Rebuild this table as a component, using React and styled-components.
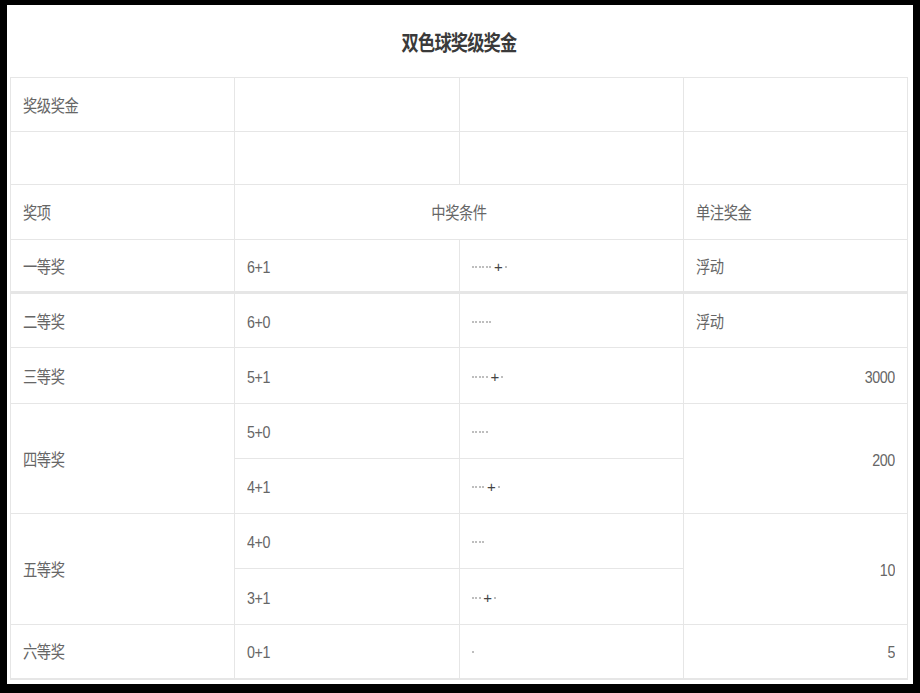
import React from "react";
import styled, { createGlobalStyle } from "styled-components";

const GlobalStyle = createGlobalStyle`
  html, body {
    margin: 0;
    padding: 0;
    background: #000;
  }
  body {
    font-family: "Liberation Sans", "Noto Sans CJK SC", sans-serif;
  }
`;

const Frame = styled.div`
  width: 920px;
  height: 693px;
  box-sizing: border-box;
  padding: 5px 7px 9px 7px;
`;

const Panel = styled.div`
  background: #fff;
  height: 100%;
  box-sizing: border-box;
  padding: 0 5px 5px 3px;
`;

const Title = styled.h2`
  margin: 0;
  height: 72px;
  line-height: 72px;
  text-align: center;
  font-family: "Noto Sans CJK SC", sans-serif;
  font-size: 21px;
  font-weight: 700;
  color: #3a3a3a;
  letter-spacing: -1px;

  span {
    display: inline-block;
    transform: scaleX(0.82);
  }
`;

const Table = styled.table`
  width: 898px;
  border-collapse: collapse;
  table-layout: fixed;
  border: 1px solid #e6e6e6;
  border-bottom-width: 2px;
  color: #666;
  font-size: 17px;
`;

const Row = styled.tr`
  height: ${(p) => p.$h || 55}px;
  border-bottom: ${(p) => (p.$thick ? "3px solid #e6e6e6" : "1px solid #e6e6e6")};
`;

const Cell = styled.td`
  border: 1px solid #e6e6e6;
  padding: 4px 12px 0;
  vertical-align: middle;
  text-align: ${(p) => p.$align || "left"};
  white-space: nowrap;
`;

const Text = styled.span`
  display: inline-block;
  line-height: 20px;
  transform: scaleX(0.84);
  transform-origin: ${(p) => p.$origin || "left"} center;
  letter-spacing: -0.5px;
`;

const Balls = styled.span`
  display: inline-flex;
  align-items: center;
  height: 20px;
  vertical-align: top;
  margin-top: -1px;
`;

const Dot = styled.span`
  width: 2px;
  height: 2px;
  border-radius: 50%;
  background: #a8a8a8;
  margin-right: 1.6px;
`;

const Plus = styled.span`
  font-size: 15px;
  line-height: 14px;
  color: #444;
  margin: 0 2px 0 1px;
`;

const Pick = ({ red, blue }) => (
  <Balls>
    {Array.from({ length: red }).map((_, i) => (
      <Dot key={i} />
    ))}
    {blue && (
      <>
        <Plus>+</Plus>
        <Dot />
      </>
    )}
  </Balls>
);

const T = ({ children, align }) => (
  <Cell $align={align}>
    <Text $origin={align === "right" ? "right" : align === "center" ? "center" : "left"}>
      {children}
    </Text>
  </Cell>
);

const App = () => (
  <Frame>
    <GlobalStyle />
    <Panel>
      <Title>
        <span>双色球奖级奖金</span>
      </Title>
      <Table>
        <tbody>
          <Row $h={54}>
            <T>奖级奖金</T>
            <Cell />
            <Cell />
            <Cell />
          </Row>
          <Row $h={53}>
            <Cell />
            <Cell />
            <Cell />
            <Cell />
          </Row>
          <Row $h={55}>
            <T>奖项</T>
            <Cell colSpan={2} $align="center">
              <Text $origin="center">中奖条件</Text>
            </Cell>
            <T>单注奖金</T>
          </Row>
          <Row $h={53} $thick>
            <T>一等奖</T>
            <T>6+1</T>
            <Cell><Pick red={6} blue /></Cell>
            <T>浮动</T>
          </Row>
          <Row $h={55}>
            <T>二等奖</T>
            <T>6+0</T>
            <Cell><Pick red={6} /></Cell>
            <T>浮动</T>
          </Row>
          <Row $h={56}>
            <T>三等奖</T>
            <T>5+1</T>
            <Cell><Pick red={5} blue /></Cell>
            <T align="right">3000</T>
          </Row>
          <Row $h={55}>
            <Cell rowSpan={2}><Text>四等奖</Text></Cell>
            <T>5+0</T>
            <Cell><Pick red={5} /></Cell>
            <Cell rowSpan={2} $align="right"><Text $origin="right">200</Text></Cell>
          </Row>
          <Row $h={55}>
            <T>4+1</T>
            <Cell><Pick red={4} blue /></Cell>
          </Row>
          <Row $h={55}>
            <Cell rowSpan={2}><Text>五等奖</Text></Cell>
            <T>4+0</T>
            <Cell><Pick red={4} /></Cell>
            <Cell rowSpan={2} $align="right"><Text $origin="right">10</Text></Cell>
          </Row>
          <Row $h={56}>
            <T>3+1</T>
            <Cell><Pick red={3} blue /></Cell>
          </Row>
          <Row $h={54}>
            <T>六等奖</T>
            <T>0+1</T>
            <Cell><Pick red={1} /></Cell>
            <T align="right">5</T>
          </Row>
        </tbody>
      </Table>
    </Panel>
  </Frame>
);

export default App;
